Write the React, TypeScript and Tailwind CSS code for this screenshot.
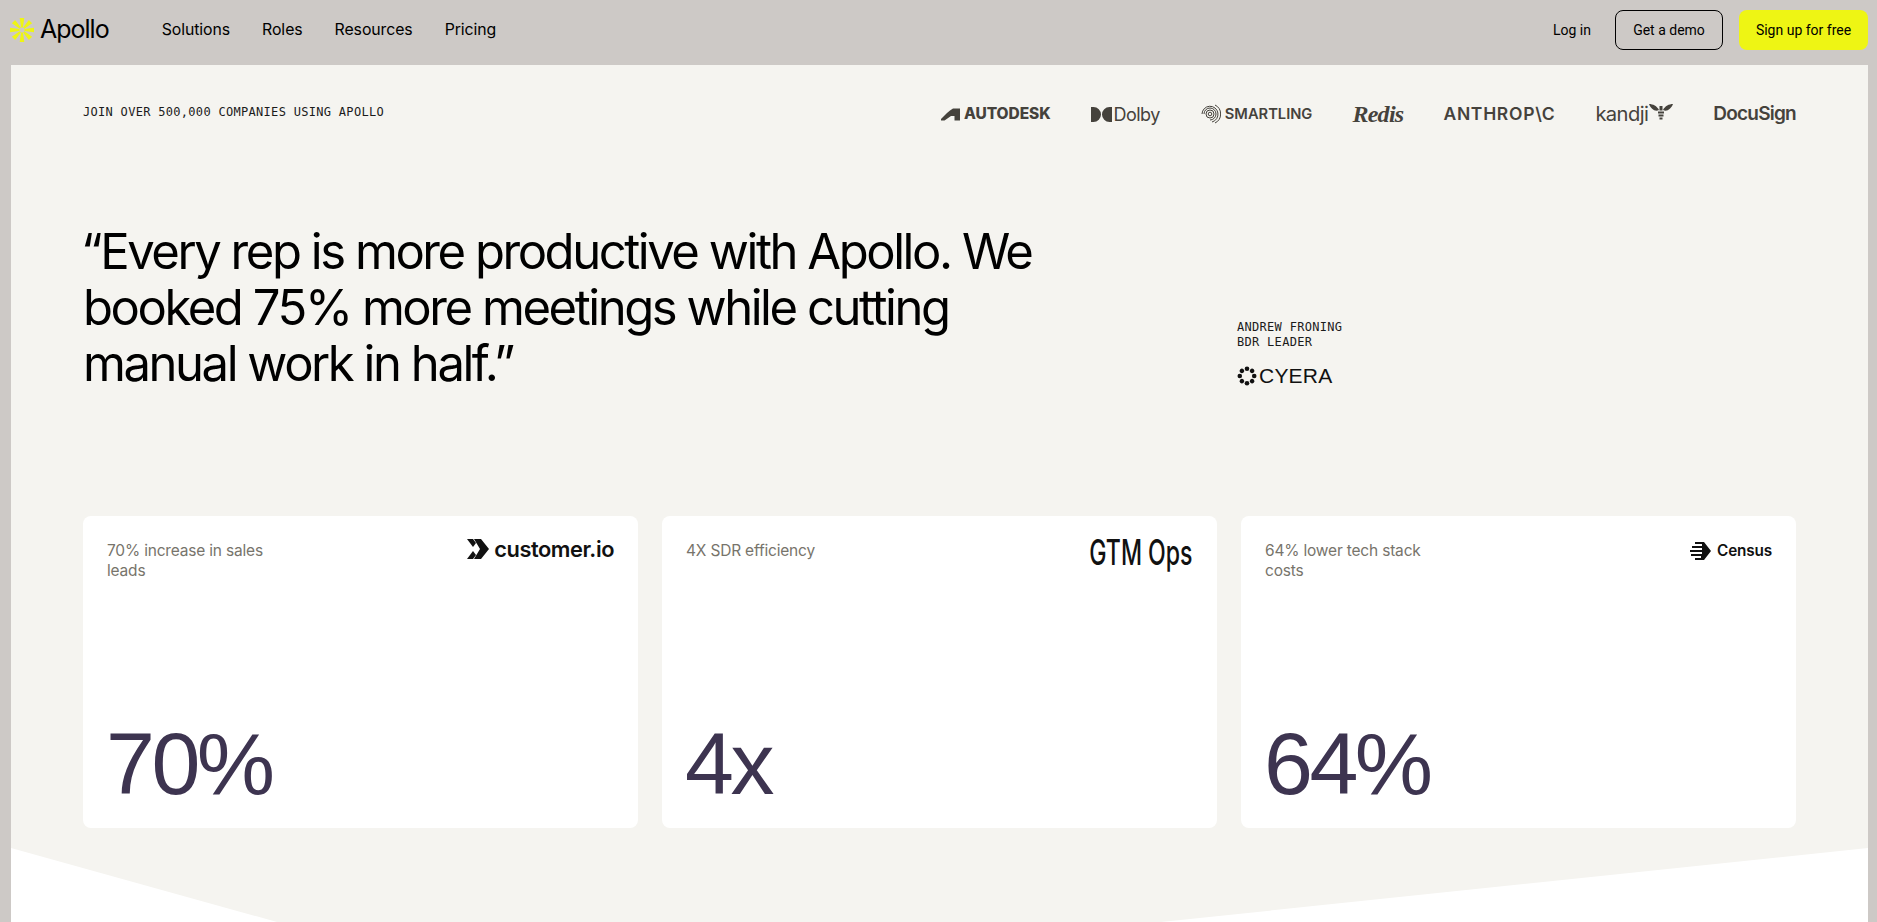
import type { ReactNode } from "react";

const sans = "font-['Inter','Liberation_Sans',sans-serif]";
const roboto = "font-['Roboto','Liberation_Sans',sans-serif]";
const arial = "font-['Liberation_Sans',Arial,sans-serif]";
const mono = "font-['DejaVu_Sans_Mono','Liberation_Mono',monospace]";

function Spark() {
  const spokes = [0, 45, 90, 135, 180, 225, 270, 315];
  return (
    <svg width="24" height="24" viewBox="0 0 24 24" fill="#eef514">
      {spokes.map((a) => (
        <path key={a} d="M9.7 0h4.6L12.900 9.500h-1.800z" transform={`rotate(${a} 12 12)`} />
      ))}
    </svg>
  );
}

function NavBar() {
  return (
    <header className={`h-[65px] flex items-center justify-between pl-[10px] pr-[9px] pb-[5px] text-black ${sans}`}>
      <div className="flex items-center">
        <Spark />
        <span className="ml-[6px] text-[25px] tracking-[-0.04em]">Apollo</span>
        <nav className="flex ml-[53px] gap-[32px] text-[15.85px] tracking-[-0.005em]">
          <a>Solutions</a>
          <a>Roles</a>
          <a>Resources</a>
          <a>Pricing</a>
        </nav>
      </div>
      <div className={`flex items-center text-[14px] ${roboto}`}>
        <a className="mr-[24px]">Log in</a>
        <a className="w-[108px] h-[40px] flex items-center justify-center rounded-lg border border-black">Get a demo</a>
        <a className="ml-[16px] w-[129px] h-[40px] flex items-center justify-center rounded-lg bg-[#eef514]">
          Sign up for free
        </a>
      </div>
    </header>
  );
}

function Logos() {
  return (
    <div className={`flex items-center gap-[40px] mt-[2px] text-[#45423c] ${sans}`}>
      <div className="flex items-center gap-[4px]">
        <svg width="19" height="13" viewBox="0 0 19 13" fill="#45423c">
          <path d="M0 12.500V11C4 7 8 2.500 12 .500h7v12h-5.500V8H10L3.500 12.500z" />
        </svg>
        <span className="text-[15.5px] font-extrabold tracking-[-0.005em]">AUTODESK</span>
      </div>
      <div className="flex items-center gap-[2px]">
        <svg width="21" height="15" viewBox="0 0 21 15" fill="#45423c">
          <path d="M0 0h2.500a7.500 7.500 0 0 1 0 15H0zM21 0v15h-2.500a7.500 7.500 0 0 1 0-15z" />
        </svg>
        <span className="text-[18px] tracking-[-0.03em]">Dolby</span>
      </div>
      <div className="flex items-center gap-[4px]">
        <svg width="21" height="21" viewBox="0 0 21 21" fill="none" stroke="#45423c">
          <circle cx="10" cy="10" r="1.8" />
          <circle cx="10" cy="10" r="4" />
          <path d="M10 16a6 6 0 1 0-6-6M12 18a8 8 0 1 0-10-8M15 19a10 10 0 0 0 0-18" />
        </svg>
        <span className="text-[14.7px] font-semibold">SMARTLING</span>
      </div>
      <span className="text-[24px] leading-[24px] italic font-bold font-['Liberation_Serif',serif] tracking-[-0.03em]">
        Redis
      </span>
      <span className="text-[17.5px] font-semibold tracking-[0.04em]">ANTHROP\C</span>
      <div className="flex items-center">
        <span className="text-[20.2px] tracking-[-0.03em]">kandji</span>
        <svg className="ml-[1px] -mt-[4px]" width="24" height="19" viewBox="0 0 24 19" fill="#45423c">
          <path d="M0 1c4 0 8 2 10 6-4 2-8-1-10-6zM24 1c-4 0-8 2-10 6 4 2 8-1 10-6zM9 8.500h6v2H9zM9.500 11.500h5v2h-5zM10.500 14.500h3v2h-3zM10.500 3h3v4.500h-3z" />
        </svg>
      </div>
      <span className="text-[19px] font-semibold tracking-[-0.04em]">DocuSign</span>
    </div>
  );
}

function CustomerIo() {
  return (
    <div className={`flex items-center gap-[5px] -mt-[3px] text-[#111] ${sans}`}>
      <svg width="22" height="20" viewBox="0 0 22 20" fill="#111">
        <path d="M0 0h6l3 4-3 4-6-8zM0 20h6l3-4-3-4-6 8zM9 0h5l8 10-8 10H9l-2 0 6-10L7 0z" />
      </svg>
      <span className="text-[21.8px] font-semibold tracking-[-0.02em] leading-[24px]">customer.io</span>
    </div>
  );
}

function GtmOps() {
  return (
    <span className={`text-[35px] font-medium leading-[34px] -mt-[5px] text-[#111] scale-x-[0.66] origin-right ${sans} whitespace-nowrap`}>
      GTM Ops
    </span>
  );
}

function Census() {
  return (
    <div className={`flex items-center gap-[6px] text-[#111] ${sans}`}>
      <svg width="21" height="18" viewBox="0 0 21 18" fill="#111">
        <path d="M5 0h9l7 9-7 9H5v-2h6v-2H1v-2h11v-2H0V8h12V6H2V4h10V2H5z" />
      </svg>
      <span className="text-[15.3px] font-semibold tracking-[-0.01em]">Census</span>
    </div>
  );
}

function StatCard({ label, value, logo }: { label: string; value: string; logo: ReactNode }) {
  return (
    <div className="bg-white rounded-lg h-[312px] px-[24px] pt-[24px] flex flex-col justify-between">
      <div className="flex justify-between items-start">
        <p className={`w-[180px] mt-[1px] text-[15.5px] leading-[20px] text-[#77746b] ${sans} tracking-[-0.012em]`}>{label}</p>
        {logo}
      </div>
      <div className={`text-[88px] leading-[100px] mb-[14px] -ml-[1px] text-[#3d3450] tracking-[-0.04em] ${arial}`}>{value}</div>
    </div>
  );
}

export default function App() {
  return (
    <div className="h-[922px] overflow-hidden bg-[#cdc9c6]">
      <NavBar />
      <main className="ml-[11px] mr-[9px] h-[857px] bg-[#f5f4f0]">
        <div className="px-[72px]">
          <div className="flex justify-between items-center pt-[32px] h-[64px]">
            <p className={`-mt-[2px] text-[12px] tracking-[0.3px] text-[#1b1b1b] ${mono}`}>JOIN OVER 500,000 COMPANIES USING APOLLO</p>
            <Logos />
          </div>
          <div className="flex items-end mt-[95px]">
            <h1 className={`w-[1154px] text-[49px] leading-[56px] tracking-[-0.05em] text-black ${sans}`}>
              <span className="-ml-[2px]">“</span>Every rep is more productive with Apollo. We
              <br />
              booked 75% more meetings while cutting
              <br />
              manual work in half.”
            </h1>
            <div className="mb-[4px]">
              <p className={`text-[12px] leading-[15px] tracking-[0.3px] text-[#1b1b1b] ${mono}`}>
                ANDREW FRONING
                <br />
                BDR LEADER
              </p>
              <div className="flex items-center gap-[2px] mt-[14px]">
                <svg width="20" height="20" viewBox="0 0 20 20" fill="#111">
                  {[0, 45, 90, 135, 180, 225, 270, 315].map((a) => (
                    <circle key={a} cx="10" cy="2.8" r="2.3" transform={`rotate(${a} 10 10)`} />
                  ))}
                </svg>
                <span className={`text-[21px] leading-[24px] tracking-[0.01em] text-[#111] ${arial}`}>CYERA</span>
              </div>
            </div>
          </div>
          <div className="grid grid-cols-3 gap-[24px] mt-[124px]">
            <StatCard label="70% increase in sales leads" value="70%" logo={<CustomerIo />} />
            <StatCard label="4X SDR efficiency" value="4x" logo={<GtmOps />} />
            <StatCard label="64% lower tech stack costs" value="64%" logo={<Census />} />
          </div>
        </div>
        <div className="mt-[20px] h-[74px] bg-white [clip-path:polygon(0_0,266px_100%,1150px_100%,100%_0,100%_100%,0_100%)]" />
      </main>
    </div>
  );
}
